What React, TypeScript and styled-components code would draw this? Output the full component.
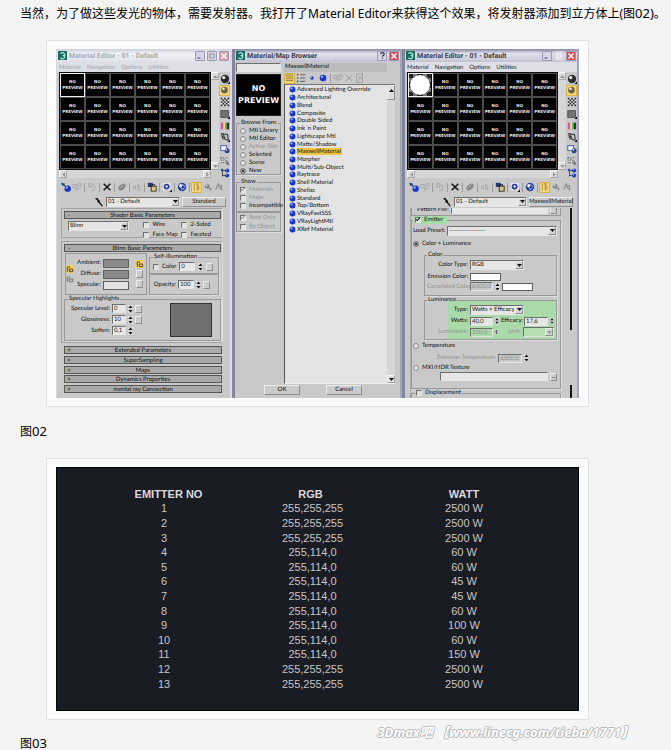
import React from "react";
import styled, { createGlobalStyle, css } from "styled-components";

const GlobalStyle = createGlobalStyle`
  *, *::before, *::after { box-sizing: border-box; }
  body { margin: 0; background: #f4f4f4; color: #000; }
`;

/* ---------- article ---------- */

const Article = styled.main`
  padding-top: 4px;
  font: 12px/20px "Noto Sans", "Noto Sans CJK SC", sans-serif;
`;

const Paragraph = styled.p`
  margin: 0 0 0 20px;
  white-space: nowrap;
`;

const Latin = styled.span`
  font-size: 13px;
  line-height: 12px;
`;

const Figure = styled.figure`
  margin: 16px 82px 15px 46px;
  padding: 8px 9px;
  border: 1px solid #e1e1e1;
  background: #fbfbfb;
`;

const Footer = styled.div`
  display: flex;
  justify-content: space-between;
  align-items: flex-start;
  margin-top: -15px;
  padding-right: 37px;
`;

const FooterCaption = styled(Paragraph)`
  padding-top: 15px;
  line-height: 18px;
`;

const Watermark = styled.span`
  font: italic 700 13px/24px "Noto Sans", "Noto Sans CJK SC", sans-serif;
  color: #fff;
  white-space: nowrap;
  text-shadow: 1px 0 #b9b9b9, -1px 0 #b9b9b9, 0 1px #b9b9b9, 0 -1px #b9b9b9;
`;

/* ---------- window frames ---------- */

const Windows = styled.div`
  display: grid;
  grid-template-columns: 176fr 170fr 177fr;
  background: #8d8da0;
  font: 6px/8px Lato, sans-serif;
  text-rendering: geometricPrecision;
  color: #111;
  white-space: nowrap;
  overflow: hidden;

  input, select, button { font: inherit; color: inherit; text-rendering: inherit; }
`;

const Win = styled.section<{ $edge?: boolean }>`
  display: flex;
  flex-direction: column;
  min-width: 0;
  background: #c9c9c9;
  border-left: ${(p) => (p.$edge ? "3px solid #85859c" : "1px solid #d8d8de")};
  border-right: 2px solid ${(p) => (p.$edge ? "#a5a5b8" : "#dcdce8")};
`;

const TitleBar = styled.header<{ $faded?: boolean }>`
  display: flex;
  align-items: center;
  gap: 2px;
  height: 13px;
  padding: 0 1px;
  font-family: Roboto, sans-serif;
  font-size: 7px;
  font-weight: 700;
  color: ${(p) => (p.$faded ? "#a9a9b0" : "#3c3c46")};
  background: ${(p) =>
    p.$faded
      ? "linear-gradient(#cfcfdc, #f3f3f8 40%, #dedee8)"
      : "linear-gradient(#8585a2, #e2e2ee 35%, #c2c2d2)"};
`;

const Title = styled.h2`
  flex: 1;
  margin: 0;
  font: inherit;
`;

const CaptionButton = styled.button<{ $kind?: "close" | "off"; $faded?: boolean }>`
  display: flex;
  align-items: center;
  justify-content: center;
  width: 10px;
  height: 10px;
  padding: 0;
  border: 1px solid ${(p) => (p.$kind === "off" ? "#cfcfdc" : "#9a9ab4")};
  border-radius: 1px;
  background: ${(p) => (p.$kind === "close" ? (p.$faded ? "#e5a0a0" : "#d24c50") : p.$kind === "off" ? "#dcdce8" : "#d6d6e6")};
`;

const MenuBar = styled.nav<{ $faded?: boolean }>`
  display: flex;
  gap: 6px;
  height: 10px;
  padding: 0 2px;
  line-height: 9px;
  background: #dedee6;
  color: ${(p) => (p.$faded ? "#a5a5a8" : "#222")};
`;

const MenuButton = styled.button`
  padding: 0;
  border: 0;
  background: none;
`;

/* ---------- sample slots ---------- */

const Workbench = styled.div`
  display: grid;
  grid-template-columns: 1fr 8px 10px;
  grid-template-rows: 98px 8px;
  padding: 0 1px 0 2px;
`;

const Slots = styled.div`
  display: grid;
  grid-template-columns: repeat(6, 1fr);
  grid-template-rows: repeat(4, 1fr);
  padding: 1px;
  background: #101010;
`;

const Slot = styled.div<{ $active?: boolean }>`
  display: flex;
  align-items: center;
  justify-content: center;
  min-width: 0;
  overflow: hidden;
  border: 1px solid ${(p) => (p.$active ? "#f2f2f2" : "#4d4d4d")};
  background: #000;
  color: #e8e8e8;
  font: 700 4px/6px "DejaVu Sans", sans-serif;
  text-align: center;
`;

const BigSlot = styled(Slot)`
  height: 42px;
  border-color: #222;
  color: #fff;
  font-size: 8px;
  line-height: 12px;
`;

const ScrollTrack = styled.div<{ $row?: boolean }>`
  display: flex;
  flex-direction: ${(p) => (p.$row ? "row" : "column")};
  justify-content: space-between;
  background: #d6d6d6;
`;

const ScrollButton = styled.button`
  display: flex;
  align-items: center;
  justify-content: center;
  width: 8px;
  height: 8px;
  padding: 0;
  border: 1px solid #a8a8a8;
  border-top-color: #f5f5f5;
  border-left-color: #f5f5f5;
  background: #dedede;
`;

const SideTools = styled.div`
  grid-row: 1 / span 2;
  grid-column: 3;
  display: flex;
  flex-direction: column;
  justify-content: space-between;
  align-items: center;
  padding: 1px 0 0 1px;
`;

const IconButton = styled.button<{ $on?: boolean }>`
  display: flex;
  align-items: center;
  justify-content: center;
  flex: none;
  width: 11px;
  height: 11px;
  padding: 0;
  border: ${(p) => (p.$on ? "1px solid #d8b24c" : "0")};
  background: ${(p) => (p.$on ? "#f7d878" : "none")};
`;

const Toolbar = styled.div`
  display: flex;
  align-items: center;
  justify-content: flex-start;
  height: 18px;
  padding-left: 3px;
`;

const Separator = styled.span`
  flex: none;
  width: 1px;
  height: 9px;
  margin: 0 1px 0 2px;
  background: #9c9c9c;
`;

const NameRow = styled.div`
  display: flex;
  align-items: center;
  gap: 2px;
  height: 12px;
  padding: 0 4px 1px 37px;
`;

/* ---------- form controls ---------- */

const sunken = css`
  border: 1px solid #6d6d6d;
  border-right-color: #e6e6e6;
  border-bottom-color: #e6e6e6;
`;

const raised = css`
  border: 1px solid #8e8e8e;
  border-top-color: #ececec;
  border-left-color: #ececec;
`;

const PushButton = styled.button<{ $w?: number; $h?: number }>`
  ${raised}
  display: flex;
  align-items: center;
  justify-content: center;
  flex: none;
  width: ${(p) => p.$w ?? 7}px;
  height: ${(p) => p.$h ?? 8}px;
  padding: 0;
  line-height: 6px;
  background: #cbcbcb;
`;

const SelectFrame = styled.span<{ $w?: number; $tint?: boolean }>`
  ${sunken}
  display: flex;
  flex: ${(p) => (p.$w ? "none" : "1")};
  width: ${(p) => (p.$w ? `${p.$w}px` : "auto")};
  min-width: 0;
  height: 10px;
  background: ${(p) => (p.$tint ? "#b4dfb2" : "#e6e6e6")};

  select {
    flex: 1;
    min-width: 0;
    padding: 0 1px;
    border: 0;
    appearance: none;
    background: none;
    line-height: 8px;
  }
`;

const ArrowBox = styled.span`
  ${raised}
  display: flex;
  align-items: center;
  justify-content: center;
  width: 8px;
  background: #d4d4d4;
`;

const TextField = styled.input<{ $w?: number; $dim?: boolean }>`
  ${sunken}
  flex: ${(p) => (p.$w ? "none" : "1")};
  width: ${(p) => (p.$w ? `${p.$w}px` : "auto")};
  min-width: 0;
  height: 9px;
  padding: 0 1px;
  background: ${(p) => (p.$dim ? "transparent" : "#e6e6e6")};
  && { color: ${(p) => (p.$dim ? "#8b8b8b" : "#1c1c1c")}; }
`;

const Tick = styled.input`
  ${sunken}
  appearance: none;
  flex: none;
  width: 6px;
  height: 6px;
  margin: 0;
  background: #e2e2e2;

  &:checked::after {
    content: "";
    display: block;
    width: 4px;
    height: 2px;
    border: solid currentColor;
    border-width: 0 0 1px 1px;
    transform: rotate(-45deg);
  }
`;

const Dot = styled.input`
  appearance: none;
  flex: none;
  width: 6px;
  height: 6px;
  margin: 0;
  border: 1px solid #8a8a8a;
  border-radius: 50%;
  background: #e4e4e4;

  &:checked { background: #111; border-width: 1px; box-shadow: inset 0 0 0 1px #bbb; }
`;

const Choice = styled.label<{ $dim?: boolean }>`
  display: flex;
  align-items: center;
  gap: 3px;
  color: ${(p) => (p.$dim ? "#959595" : "inherit")};
`;

const Swatch = styled.button<{ $w: number; $h?: number; $color: string }>`
  flex: none;
  width: ${(p) => p.$w}px;
  height: ${(p) => p.$h ?? 9}px;
  padding: 0;
  border: 1px solid #5f5f5f;
  background: ${(p) => p.$color};
`;

const Row = styled.div<{ $h?: number; $in?: number; $gap?: number }>`
  display: flex;
  align-items: center;
  gap: ${(p) => p.$gap ?? 2}px;
  height: ${(p) => p.$h ?? 11}px;
  padding-left: ${(p) => p.$in ?? 0}px;
`;

const FieldLabel = styled.label<{ $w?: number; $dim?: boolean }>`
  flex: none;
  width: ${(p) => (p.$w ? `${p.$w}px` : "auto")};
  text-align: right;
  color: ${(p) => (p.$dim ? "#939393" : "inherit")};
`;

const Group = styled.fieldset<{ $h?: number }>`
  min-width: 0;
  height: ${(p) => (p.$h ? `${p.$h}px` : "auto")};
  margin: 0;
  padding: 0 3px;
  border: 1px solid #999;
  box-shadow: 1px 1px 0 #dcdcdc;

  legend { padding: 0 1px; line-height: 8px; background: #c9c9c9; }
`;

/* ---------- rollouts of the standard material ---------- */

const RolloutArea = styled.div`
  display: flex;
  flex-direction: column;
  gap: 3px;
  height: 190px;
  padding: 0 7px 0 4px;
`;

const Rollout = styled.div<{ $h: number }>`
  height: ${(p) => p.$h}px;
  padding: 2px 1px 0 2px;
  border: 1px solid #a3a3a3;
  border-right-color: #dedede;
`;

const RolloutHead = styled.button`
  display: grid;
  grid-template-columns: 6px 1fr 6px;
  align-items: center;
  width: 100%;
  min-height: 8px;
  height: 8px;
  padding: 0 1px;
  border: 1px solid #555;
  background: #a9a9a9;
  line-height: 6px;
`;

const ClosedRollouts = styled.div`
  display: flex;
  flex-direction: column;
  justify-content: space-between;
  height: 47px;
  padding: 0 1px 0 3px;
`;

const CheckGrid = styled.div`
  display: grid;
  grid-template-columns: 38px 1fr;
  row-gap: 2px;
`;

const BlinnRow = styled.div`
  display: flex;
  justify-content: space-between;
  align-items: flex-start;
  padding: 2px 10px 0 4px;
`;

const BlinnGrid = styled.div`
  display: grid;
  grid-template-columns: 82fr 70fr;
  gap: 2px;
  padding: 1px 2px 0 1px;
`;

const Column = styled.div`
  display: flex;
  flex-direction: column;
`;

const ColorBox = styled.div`
  display: grid;
  grid-template-columns: 10px 1fr 10px;
  align-items: center;
  height: 42px;
  border: 1px solid #999;
`;

const ColorTools = styled(Column)`
  gap: 2px;
`;

const Highlights = styled.div`
  display: flex;
  justify-content: space-between;
  padding-right: 5px;
`;

const Graph = styled.div`
  width: 42px;
  height: 34px;
  border: 1px solid #333;
  background: #707070;
`;

/* ---------- browser ---------- */

const BrowserBody = styled.div`
  display: grid;
  grid-template-columns: 45px 1fr;
  gap: 3px;
  flex: 1;
  padding: 1px 5px 0 1px;
`;

const BrowserSide = styled.div`
  display: flex;
  flex-direction: column;
  gap: 3px;
`;

const Readout = styled.output`
  height: 9px;
  padding-left: 1px;
  background: #bcbcbc;
  margin-right: 8px;
`;

const ListFrame = styled.div`
  display: grid;
  grid-template-columns: 1fr 8px;
  height: 300px;
  border-left: 1px solid #555;
  border-top: 1px solid #777;
  border-bottom: 1px solid #eee;
`;

const MaterialList = styled.ul`
  display: grid;
  grid-template-rows: repeat(19, 1fr);
  height: 148px;
  margin: 0;
  padding: 1px 0 0 4px;
  list-style: none;
`;

const ListFill = styled.div`
  background: #e3e3e3;
`;

const Material = styled.li<{ $on?: boolean }>`
  display: flex;
  align-items: center;
  gap: 1px;
  min-height: 0;
  line-height: 7px;

  span { background: ${(p) => (p.$on ? "#f0c440" : "none")}; padding: 0 1px 0 0; }
`;

const Thumb = styled.div`
  height: 15px;
  ${raised}
  background: #dedede;
  display: flex;
  justify-content: center;
  padding-top: 2px;
`;

const DialogButtons = styled.div`
  display: flex;
  gap: 26px;
  height: 14px;
  padding: 1px 0 0 29px;
`;

/* ---------- emitter parameters ---------- */

const ParamArea = styled.div`
  display: grid;
  grid-template-columns: 1fr 3px;
  column-gap: 9px;
  height: 190px;
  padding: 0 4px 0 5px;
  overflow: hidden;
`;

const ParamList = styled.div`
  display: flex;
  flex-direction: column;
  min-width: 0;
  border-left: 1px solid #aaa;
`;

const ClippedRow = styled.div`
  display: flex;
  align-items: flex-end;
  gap: 2px;
  height: 8px;
  overflow: hidden;
  padding: 0 3px 1px 5px;
  border: 1px solid #999;
  border-top: 0;
`;

const ParamScroll = styled.div`
  display: flex;
  flex-direction: column;
  justify-content: space-between;

  span { width: 2px; background: #161616; }
  span:first-child { height: 122px; }
  span:last-child { height: 20px; }
`;

const EmitterGroup = styled(Group)`
  padding: 0 3px 0 1px;
  > legend { background: #a5dda5; padding: 0 4px 0 2px; }
`;

const Nested = styled(Group)<{ $green?: boolean }>`
  margin-left: 11px;
  padding: 0 2px;
  background: ${(p) => (p.$green ? "linear-gradient(to right, transparent 23px, #aad9aa 23px)" : "none")};
  legend { background: none; }
`;

/* ---------- emitter table ---------- */

const Board = styled.div`
  padding: 19px 39px 19px 32px;
  background: #191c22;
  border: 1px solid #050608;
`;

const EmitterTable = styled.table`
  width: 100%;
  height: 204px;
  table-layout: fixed;
  border-collapse: collapse;
  font: 11px/14px "Liberation Sans", Arial, sans-serif;
  color: #c9c5c8;
  text-align: center;

  th, td { padding: 0; }
  th { color: #dcd8dc; }
  th:first-child { padding-left: 9px; }
  th:nth-child(2) { padding-right: 7px; }
  td:nth-child(2) { padding-right: 3px; }
`;

/* ---------- icons ---------- */

const Svg = ({ children, size = 10 }: { children: React.ReactNode; size?: number }) => (
  <svg width={size} height={size} viewBox="0 0 12 12" aria-hidden="true">{children}</svg>
);

const Arrow = ({ d = "M0 1h5L2.5 4z", dim }: { d?: string; dim?: boolean }) => (
  <svg width="5" height="5" viewBox="0 0 5 5" aria-hidden="true"><path d={d} fill={dim ? "#999" : "#111"} /></svg>
);

const Ball = ({ x = 6, y = 6, r = 4, dark = "#1834c8", light = "#8ab0ff" }) => (
  <g>
    <circle cx={x} cy={y} r={r} fill={dark} />
    <circle cx={x - r * 0.3} cy={y - r * 0.35} r={r * 0.38} fill={light} />
  </g>
);

const AppIcon = () => (
  <Svg size={9}>
    <rect width="12" height="12" rx="1" fill="#14685e" />
    <path d="M3 3.500q3-2.500 5.500 0T6 6q4 0 2.500 3T3 9" fill="none" stroke="#a6e6d8" strokeWidth="1.700" />
  </Svg>
);

const sideIcons: React.ReactNode[] = [
  <><Ball r={5} dark="#2c2c2c" light="#eee" /><path d="M12 9v3H9z" /></>,
  <Ball r={4.5} dark="#6b6048" light="#fff3c8" />,
  <>
    <rect x="1" y="1" width="10" height="10" fill="#e9e9e9" />
    <path d="M1 1h2v2H1zM5 1h2v2H5zM9 1h2v2H9zM3 3h2v2H3zM7 3h2v2H7zM1 5h2v2H1zM5 5h2v2H5zM9 5h2v2H9zM3 7h2v2H3zM7 7h2v2H7zM1 9h2v2H1zM5 9h2v2H5zM9 9h2v2H9z" fill="#222" />
  </>,
  <><rect x="1" y="2" width="9" height="8" fill="#737373" stroke="#444" /><path d="M12 9v3H9z" /></>,
  <>
    <path d="M1 2h3v8H1z" fill="#e74ca0" /><path d="M4 2h2v8H4z" fill="#f4ec70" />
    <path d="M6 2h2v8H6z" fill="#42c264" /><path d="M8 2h3v8H8z" fill="#333" />
  </>,
  <><path d="M1 2l3 0 2 7M4 2l5 1 1 7M6 9l4 1M2 3l2 6M2 6h3" fill="none" stroke="#333" strokeWidth="1.300" /><path d="M12 9v3H9z" /></>,
  <><rect x="1" y="2" width="7" height="6" fill="#eef" stroke="#3b4fa4" /><Ball x={8.5} y={8} r={3} dark="#33427c" light="#c8d8ff" /></>,
  <><path d="M1 2h4v3H1zM7 2h3M1 8h4M7 5v4l4 2-2-5z" fill="none" stroke="#555" strokeDasharray="1.500 1" /><path d="M8 6l3 4H8z" fill="#666" /></>,
  <><path d="M3 1v9M3 3h4M3 9h4" stroke="#333" /><Ball x={8.5} y={3} r={2.5} /><Ball x={8.5} y={9} r={2.5} /><path d="M1 1h3v3H1z" fill="#3156a8" /></>,
];

const toolIcons: { on?: boolean; sep?: boolean; art: React.ReactNode }[] = [
  { art: <><Ball x={8} y={8} r={3.8} /><path d="M0 1l5 1-1 1 2 2-1 1-2-2-1 1z" fill="#17405e" /></> },
  { sep: true, art: <path d="M1 3h4v4H1zM7 2h4v3H7zM5 8h5M6 7v4" fill="none" stroke="#a2a2a2" /> },
  { sep: true, art: <path d="M2 2h4v4H2zM8 3l2 3-2 4H5" fill="none" stroke="#a2a2a2" /> },
  { sep: true, art: <path d="M2 2l8 8M10 2l-8 8" stroke="#141414" strokeWidth="1.800" /> },
  { sep: true, art: <><ellipse cx="6" cy="6" rx="5" ry="3" transform="rotate(-40 6 6)" fill="#858585" /><path d="M3 8l5-5" stroke="#c8c8c8" /></> },
  { sep: true, art: <path d="M2 9V6l2-2v5M6 4l4 1M7 2v8M9 6v4" fill="none" stroke="#a2a2a2" /> },
  { sep: true, art: <><rect x="1" y="1" width="6" height="5" fill="#263a72" /><rect x="5" y="5" width="6" height="6" fill="#d8ca78" stroke="#222" /><path d="M6 5V3h3v2" fill="none" stroke="#222" /></> },
  { sep: true, art: <><rect x="1" y="1" width="9" height="9" fill="#e6e8f4" /><circle cx="5.500" cy="5.500" r="2.500" fill="none" stroke="#22389c" strokeWidth="2" /><path d="M12 9v3H9z" /></> },
  { sep: true, art: <><Ball r={5} dark="#223c9c" light="#eef" /><path d="M2 4l4 4M6 2l4 4M5 10l4-3" stroke="#cfe0ff" /></> },
  { on: true, art: <path d="M3 1v10M7 1v10M5 2h4M9 4v6" stroke="#9a7624" fill="none" /> },
  { art: <><Ball x={5} y={5} r={3} dark="#8c8c8c" light="#ddd" /><path d="M6 7l4 1-2 3" fill="none" stroke="#777" /></> },
  { art: <path d="M2 9l3-7 2 5 3 3M5 6l4-2v5" fill="none" stroke="#8f8f8f" strokeWidth="1.300" /> },
];

/* ---------- pieces ---------- */

const CloseX = () => <Svg size={6}><path d="M1 1l10 10M11 1L1 11" stroke="#fff" strokeWidth="3" /></Svg>;

const Picker = ({ label, value, w, tint }: { label: string; value: string; w?: number; tint?: boolean }) => (
  <SelectFrame $w={w} $tint={tint}>
    <select aria-label={label} disabled={tint}><option>{value}</option></select>
    <ArrowBox><Arrow dim={tint} /></ArrowBox>
  </SelectFrame>
);

const Spinner = () => (
  <svg width="5" height="8" viewBox="0 0 5 8" aria-hidden="true">
    <rect width="5" height="8" fill="#d6d6d6" /><path d="M0.500 3h4l-2-2.500zM0.500 5h4l-2 2.500z" fill="#111" />
  </svg>
);

function Numeric({ id, label, value, labelW, w, dim }: { id: string; label: string; value: string; labelW?: number; w: number; dim?: boolean }) {
  return (
    <>
      <FieldLabel htmlFor={id} $w={labelW} $dim={dim}>{label}</FieldLabel>
      <TextField id={id} $w={w} $dim={dim} defaultValue={value} />
      <Spinner />
    </>
  );
}

const NoPreview = () => <span>NO<br />PREVIEW</span>;

function EditorTop({ faded, lit, kind }: { faded?: boolean; lit?: boolean; kind: string }) {
  return (
    <>
      <TitleBar $faded={faded}>
        <AppIcon />
        <Title>Material Editor - 01 - Default</Title>
        <CaptionButton aria-label="Minimize"><Svg size={6}><path d="M1 10h6" stroke="#333a66" strokeWidth="2" /></Svg></CaptionButton>
        <CaptionButton aria-label="Maximize" $kind={faded ? undefined : "off"}><Svg size={6}><path d="M1 2h9v8H1z" fill="none" stroke={faded ? "#7d7d98" : "#fff"} strokeWidth="1.500" /></Svg></CaptionButton>
        <CaptionButton aria-label="Close" $kind="close" $faded={faded}><CloseX /></CaptionButton>
      </TitleBar>
      <MenuBar $faded={faded}>
        {["Material", "Navigation", "Options", "Utilities"].map((m) => <MenuButton key={m}>{m}</MenuButton>)}
      </MenuBar>
      <Workbench>
        <Slots>
          {Array.from({ length: 24 }, (_, i) => (
            <Slot key={i} $active={i === 0}>
              {lit && i === 0 ? (
                <svg width="22" height="22" viewBox="0 0 22 22" aria-hidden="true">
                  <rect width="22" height="22" fill="#222" />
                  <path d="M0 4h4V0h4v3H4v5H0zM18 0v4h4v4h-3V3h-5V0zM0 18h4v4h4v-3H3v-5H0zM22 18h-4v4h-4v-3h5v-5h3z" fill="#777" />
                  <circle cx="11" cy="11" r="10" fill="#fff" />
                </svg>
              ) : <NoPreview />}
            </Slot>
          ))}
        </Slots>
        <ScrollTrack>
          <ScrollButton aria-label="Up"><Arrow dim d="M0 4h5L2.500 1z" /></ScrollButton>
          <ScrollButton aria-label="Down"><Arrow dim /></ScrollButton>
        </ScrollTrack>
        <ScrollTrack $row>
          <ScrollButton aria-label="Left"><Arrow dim d="M4 0v5L1 2.500z" /></ScrollButton>
          <ScrollButton aria-label="Right"><Arrow dim d="M1 0v5L4 2.500z" /></ScrollButton>
        </ScrollTrack>
        <SideTools>
          {sideIcons.map((art, i) => <IconButton key={i} $on={i === 1} aria-label={`Sample tool ${i + 1}`}><Svg>{art}</Svg></IconButton>)}
        </SideTools>
      </Workbench>
      <Toolbar>
        {toolIcons.map((t, i) => (
          <React.Fragment key={i}>
            <IconButton $on={t.on} aria-label={`Material tool ${i + 1}`}><Svg>{t.art}</Svg></IconButton>
            {t.sep && <Separator />}
          </React.Fragment>
        ))}
      </Toolbar>
      <NameRow>
        <Svg><path d="M1 2l3-1 2 3 1 0 0 2-2 1-1-1 0-2z" fill="#111" /><path d="M6 6l4 5" stroke="#111" strokeWidth="1.500" /></Svg>
        <Picker label="Material name" value="01 - Default" />
        <PushButton $w={44} $h={10}>{kind}</PushButton>
      </NameRow>
    </>
  );
}

const LockIcon = ({ on }: { on?: boolean }) => (
  <Svg size={8}>
    <rect width="12" height="12" fill={on ? "#f3cf68" : "#c4c4c4"} />
    <path d="M2 10V3h4M5 6h5v4H5z" fill="none" stroke={on ? "#54431a" : "#777"} strokeWidth="1.500" />
  </Svg>
);

function StandardEditor() {
  return (
    <Win>
      <EditorTop faded kind="Standard" />
      <RolloutArea>
        <Rollout $h={30}>
          <RolloutHead><span>-</span><span>Shader Basic Parameters</span></RolloutHead>
          <BlinnRow>
            <Picker label="Shader" value="Blinn" w={61} />
            <CheckGrid>
              {["Wire", "2-Sided", "Face Map", "Faceted"].map((c) => <Choice key={c}><Tick type="checkbox" />{c}</Choice>)}
            </CheckGrid>
          </BlinnRow>
        </Rollout>
        <Rollout $h={102}>
          <RolloutHead><span>-</span><span>Blinn Basic Parameters</span></RolloutHead>
          <BlinnGrid>
            <ColorBox>
              <ColorTools><LockIcon on /><LockIcon /></ColorTools>
              <Column>
                {[["Ambient:", "#8a8a8a"], ["Diffuse:", "#8a8a8a"], ["Specular:", "#e4e4e4"]].map(([l, c], i) => (
                  <Row key={l}>
                    <FieldLabel htmlFor={`c${i}`} $w={25}>{l}</FieldLabel>
                    <Swatch id={`c${i}`} $w={26} $color={c} />
                  </Row>
                ))}
              </Column>
              <ColorTools>
                <LockIcon on />
                <PushButton aria-label="Diffuse map" />
                <PushButton aria-label="Specular map" />
              </ColorTools>
            </ColorBox>
            <Column>
              <Group $h={21}>
                <legend>Self-Illumination</legend>
                <Row $gap={3}>
                  <Tick type="checkbox" id="si" />
                  <Numeric id="sic" label="Color" value="0" w={16} />
                  <PushButton aria-label="Illumination map" />
                </Row>
              </Group>
              <Group as="div" $h={21}>
                <Row $h={19}>
                  <Numeric id="op" label="Opacity:" value="100" labelW={23} w={16} />
                  <PushButton aria-label="Opacity map" />
                </Row>
              </Group>
            </Column>
          </BlinnGrid>
          <Group $h={46}>
            <legend>Specular Highlights</legend>
            <Highlights>
              <Column>
                {[["Specular Level:", "0"], ["Glossiness:", "10"], ["Soften:", "0,1"]].map(([l, v], i) => (
                  <Row key={l}>
                    <Numeric id={`s${i}`} label={l} value={v} labelW={42} w={14} />
                    {i < 2 && <PushButton aria-label={`${l} map`} />}
                  </Row>
                ))}
              </Column>
              <Graph />
            </Highlights>
          </Group>
        </Rollout>
        <ClosedRollouts>
          {["Extended Parameters", "SuperSampling", "Maps", "Dynamics Properties", "mental ray Connection"].map((r) => (
            <RolloutHead key={r}><span>+</span><span>{r}</span></RolloutHead>
          ))}
        </ClosedRollouts>
      </RolloutArea>
    </Win>
  );
}

const materials = [
  "Advanced Lighting Override", "Architectural", "Blend", "Composite", "Double Sided", "Ink 'n Paint", "Lightscape Mtl",
  "Matte/Shadow", "MaxwellMaterial", "Morpher", "Multi/Sub-Object", "Raytrace", "Shell Material", "Shellac", "Standard",
  "Top/Bottom", "VRayFastSSS", "VRayLightMtl", "XRef Material",
];

function Browser() {
  return (
    <Win $edge>
      <TitleBar>
        <AppIcon />
        <Title>Material/Map Browser</Title>
        <CaptionButton aria-label="Help"><Svg size={7}><path d="M3 4q0-3 3-3t3 3q0 1.500-3 3v1M6 10v1.500" fill="none" stroke="#334" strokeWidth="2" /></Svg></CaptionButton>
        <CaptionButton aria-label="Close" $kind="close"><CloseX /></CaptionButton>
      </TitleBar>
      <BrowserBody>
        <BrowserSide>
          <Row $h={8}><TextField aria-label="Search" /></Row>
          <BigSlot><NoPreview /></BigSlot>
          <Group $h={56}>
            <legend>Browse From:</legend>
            {["Mtl Library", "Mtl Editor", "Active Slot", "Selected", "Scene", "New"].map((r) => (
              <Row key={r} $h={8}><Choice $dim={r === "Active Slot"}><Dot type="radio" name="from" defaultChecked={r === "New"} />{r}</Choice></Row>
            ))}
          </Group>
          <Column>
            <Group $h={34}>
              <legend>Show</legend>
              {["Materials", "Maps", "Incompatible"].map((r) => (
                <Row key={r} $h={8}><Choice $dim={r !== "Incompatible"}><Tick type="checkbox" defaultChecked={r === "Materials"} />{r}</Choice></Row>
              ))}
            </Group>
            <Group as="div" $h={20}>
              {["Root Only", "By Object"].map((r) => (
                <Row key={r} $h={9}><Choice $dim><Tick type="checkbox" defaultChecked={r === "Root Only"} />{r}</Choice></Row>
              ))}
            </Group>
          </Column>
        </BrowserSide>
        <Column>
          <Readout>MaxwellMaterial</Readout>
          <Row $h={12} $gap={0}>
            <IconButton $on aria-label="List view"><Svg><path d="M1 2h10M1 4.500h10M1 7h10M1 9.500h10" stroke="#7c6220" /></Svg></IconButton>
            <IconButton aria-label="Icon list"><Svg><path d="M5 2h6M5 6h6M5 10h6" stroke="#444" /><path d="M1 1h2v2H1z" fill="#c33" /><path d="M1 5h2v2H1zM1 9h2v2H1z" fill="#384" /></Svg></IconButton>
            <IconButton aria-label="Small icons"><Svg><Ball r={2} /></Svg></IconButton>
            <IconButton aria-label="Large icons"><Svg><Ball /></Svg></IconButton>
            <Separator />
            <IconButton aria-label="Update scene"><Svg>{toolIcons[1].art}</Svg></IconButton>
            <IconButton aria-label="Delete"><Svg><path d="M2 2l8 8M10 2l-8 8" stroke="#999" /></Svg></IconButton>
            <IconButton aria-label="Clear"><Svg><path d="M2 1h7v10H2zM4 4l4 4M8 4L4 8" fill="none" stroke="#999" /></Svg></IconButton>
          </Row>
          <ListFrame>
            <ListFill>
              <MaterialList>
                {materials.map((m) => (
                  <Material key={m} $on={m === "MaxwellMaterial"}><Svg size={7}><Ball r={5} /></Svg><span>{m}</span></Material>
                ))}
              </MaterialList>
            </ListFill>
            <ScrollTrack>
              <Thumb><Arrow d="M0 4h5L2.500 1z" /></Thumb>
              <ScrollButton aria-label="Scroll down"><Arrow /></ScrollButton>
            </ScrollTrack>
          </ListFrame>
        </Column>
      </BrowserBody>
      <DialogButtons>
        <PushButton $w={36} $h={10}>OK</PushButton>
        <PushButton $w={36} $h={10}>Cancel</PushButton>
      </DialogButtons>
    </Win>
  );
}

function MaxwellEditor() {
  return (
    <Win $edge>
      <EditorTop lit kind="MaxwellMaterial" />
      <ParamArea>
        <ParamList>
          <ClippedRow>
            <FieldLabel htmlFor="pf">Pattern File:</FieldLabel>
            <TextField id="pf" />
            <PushButton aria-label="Browse pattern" />
          </ClippedRow>
          <EmitterGroup $h={173}>
            <legend><Choice><Tick type="checkbox" defaultChecked />Emitter</Choice></legend>
            <Row $h={13}>
              <FieldLabel>Load Preset:</FieldLabel>
              <Picker label="Load preset" value="----------------" />
            </Row>
            <Row $h={14}><Choice><Dot type="radio" name="em" defaultChecked />Color + Luminance</Choice></Row>
            <Nested $h={45}>
              <legend>Color</legend>
              <Row $h={12}><FieldLabel $w={41}>Color Type:</FieldLabel><Picker label="Color type" value="RGB" w={54} /></Row>
              <Row><FieldLabel htmlFor="ec" $w={41}>Emission Color:</FieldLabel><Swatch id="ec" $w={31} $h={8} $color="#fff" /></Row>
              <Row $h={9}>
                <Numeric id="cc" label="Correlated Color:" value="6500,0" labelW={41} w={23} dim />
                <Swatch aria-label="Correlated color swatch" $w={31} $h={8} $color="#fff" />
              </Row>
            </Nested>
            <Nested $h={44} $green>
              <legend>Luminance</legend>
              <Row><FieldLabel $w={41}>Type:</FieldLabel><Picker label="Luminance type" value="Watts + Efficacy" w={54} /></Row>
              <Row $h={12}>
                <Numeric id="wa" label="Watts:" value="40,0" labelW={41} w={23} />
                <Numeric id="ef" label="Efficacy:" value="17,6" labelW={21} w={24} />
              </Row>
              <Row $h={10}>
                <Numeric id="lu" label="Luminance:" value="100,0" labelW={41} w={23} dim />
                <FieldLabel $w={21} $dim>Unit:</FieldLabel>
                <Picker label="Unit" value="" w={31} tint />
              </Row>
            </Nested>
            <Row $h={12}><Choice><Dot type="radio" name="em" />Temperature</Choice></Row>
            <Row $h={12} $in={24}><Numeric id="et" label="Emission Temperature:" value="6500,0" w={24} dim /></Row>
            <Row $h={7}><Choice><Dot type="radio" name="em" />MXI/HDR Texture</Choice></Row>
            <Row $in={27}><TextField aria-label="Texture file" /><PushButton>...</PushButton></Row>
          </EmitterGroup>
          <Group $h={16}>
            <legend><Choice><Tick type="checkbox" />Displacement</Choice></legend>
          </Group>
        </ParamList>
        <ParamScroll><span /><span /></ParamScroll>
      </ParamArea>
    </Win>
  );
}

const ORANGE = "255,114,0";
const WHITE = "255,255,255";
const emitters: [string, string][] = [
  [WHITE, "2500 W"], [WHITE, "2500 W"], [WHITE, "2500 W"], [ORANGE, "60 W"], [ORANGE, "60 W"], [ORANGE, "45 W"], [ORANGE, "45 W"],
  [ORANGE, "60 W"], [ORANGE, "100 W"], [ORANGE, "60 W"], [ORANGE, "150 W"], [WHITE, "2500 W"], [WHITE, "2500 W"],
];

export default function App() {
  return (
    <Article>
      <GlobalStyle />
      <Paragraph>
        当然，为了做这些发光的物体，需要发射器。我打开了Material Editor来获得这个效果，将发射器添加到立方体上(图<Latin>02)</Latin>。
      </Paragraph>
      <Figure>
        <Windows>
          <StandardEditor />
          <Browser />
          <MaxwellEditor />
        </Windows>
      </Figure>
      <Paragraph>图<Latin>02</Latin></Paragraph>
      <Figure>
        <Board>
          <EmitterTable>
            <thead><tr><th>EMITTER NO</th><th>RGB</th><th>WATT</th></tr></thead>
            <tbody>
              {emitters.map(([rgb, watt], i) => <tr key={i}><td>{i + 1}</td><td>{rgb}</td><td>{watt}</td></tr>)}
            </tbody>
          </EmitterTable>
        </Board>
      </Figure>
      <Footer>
        <FooterCaption>图<Latin>03</Latin></FooterCaption>
        <Watermark>3Dmax吧 【www.linecg.com/tieba/1771】</Watermark>
      </Footer>
    </Article>
  );
}
